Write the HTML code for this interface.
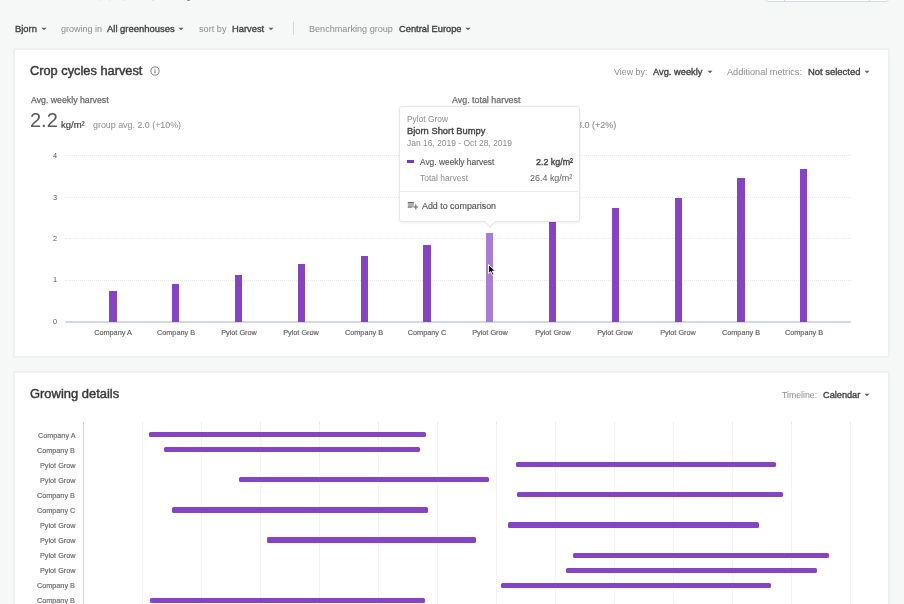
<!DOCTYPE html>
<html><head><meta charset="utf-8"><style>
html,body{margin:0;padding:0;width:904px;height:604px;overflow:hidden;background:#f6f8f7;}
body{position:relative;font-family:"Liberation Sans",sans-serif;}
.t{position:absolute;white-space:nowrap;line-height:20px;will-change:transform;}
.card{position:absolute;background:#fff;border:2px solid #eef0f3;border-radius:2px;box-sizing:border-box;}
</style></head><body>
<div style="position:absolute;left:765px;top:-20px;width:124px;height:21.5px;background:#fff;border:1px solid #d3dbe6;border-radius:3px;box-sizing:border-box"></div>
<div style="position:absolute;left:784.00px;top:-5.00px;width:1.00px;height:6.00px;background:#d3dbe6;"></div>
<div style="position:absolute;left:868.50px;top:-5.00px;width:1.00px;height:6.00px;background:#d3dbe6;"></div>
<div style="position:absolute;left:187.20px;top:0.00px;width:3.20px;height:1.00px;background:#8a8a8a;border-radius:0 0 1.5px 1.5px"></div>
<div style="position:absolute;left:98.70px;top:0.00px;width:1.60px;height:0.80px;background:#e2e4e4;"></div>
<div style="position:absolute;left:108.50px;top:0.00px;width:1.60px;height:0.80px;background:#e2e4e4;"></div>
<div style="position:absolute;left:122.70px;top:0.00px;width:1.60px;height:0.80px;background:#e2e4e4;"></div>
<div style="position:absolute;left:124.80px;top:0.00px;width:1.60px;height:0.80px;background:#e2e4e4;"></div>
<div style="position:absolute;left:152.40px;top:0.00px;width:1.60px;height:0.80px;background:#e2e4e4;"></div>
<div class="t" style="left:15.00px;top:19.00px;font-size:9.4px;font-weight:400;color:#424242;-webkit-text-stroke:0.35px #424242;">Bjorn</div>
<svg style="position:absolute;left:39.90px;top:24.90px" width="8" height="8" viewBox="0 0 8 8"><path d="M1.5 2.7 L6.5 2.7 L4 5.2 Z" fill="#606060"/></svg>
<div class="t" style="left:60.50px;top:19.00px;font-size:9.0px;font-weight:400;color:#8c8c8c;">growing in</div>
<div class="t" style="left:107.40px;top:19.00px;font-size:9.45px;font-weight:400;color:#424242;-webkit-text-stroke:0.35px #424242;">All greenhouses</div>
<svg style="position:absolute;left:177.40px;top:24.90px" width="8" height="8" viewBox="0 0 8 8"><path d="M1.5 2.7 L6.5 2.7 L4 5.2 Z" fill="#606060"/></svg>
<div class="t" style="left:198.80px;top:19.00px;font-size:9.2px;font-weight:400;color:#8c8c8c;">sort by</div>
<div class="t" style="left:232.40px;top:19.00px;font-size:9.35px;font-weight:400;color:#424242;-webkit-text-stroke:0.35px #424242;">Harvest</div>
<svg style="position:absolute;left:267.40px;top:24.90px" width="8" height="8" viewBox="0 0 8 8"><path d="M1.5 2.7 L6.5 2.7 L4 5.2 Z" fill="#606060"/></svg>
<div style="position:absolute;left:293.00px;top:22.00px;width:1.00px;height:13.00px;background:#cfd8e2;"></div>
<div class="t" style="left:309.20px;top:19.00px;font-size:9.1px;font-weight:400;color:#8c8c8c;">Benchmarking group</div>
<div class="t" style="left:398.60px;top:19.00px;font-size:9.3px;font-weight:400;color:#424242;-webkit-text-stroke:0.35px #424242;">Central Europe</div>
<svg style="position:absolute;left:463.90px;top:24.90px" width="8" height="8" viewBox="0 0 8 8"><path d="M1.5 2.7 L6.5 2.7 L4 5.2 Z" fill="#606060"/></svg>
<div class="card" style="left:13px;top:48px;width:877px;height:309.5px"></div>
<div class="t" style="left:30.20px;top:61.00px;font-size:12.8px;font-weight:400;color:#3a3a3a;-webkit-text-stroke:0.45px #3a3a3a;">Crop cycles harvest</div>
<svg style="position:absolute;left:149.9px;top:65.9px" width="10" height="10" viewBox="0 0 10 10"><circle cx="5" cy="5" r="4.1" fill="none" stroke="#7a7a7a" stroke-width="0.95"/><rect x="4.45" y="4.3" width="1.1" height="2.9" fill="#7a7a7a"/><rect x="4.45" y="2.7" width="1.1" height="1" fill="#8a8a8a"/></svg>
<div class="t" style="left:613.50px;top:62.00px;font-size:8.9px;font-weight:400;color:#8c8c8c;">View by:</div>
<div class="t" style="left:653.10px;top:62.00px;font-size:9.3px;font-weight:400;color:#424242;-webkit-text-stroke:0.35px #424242;">Avg. weekly</div>
<svg style="position:absolute;left:705.70px;top:68.30px" width="8" height="8" viewBox="0 0 8 8"><path d="M1.5 2.7 L6.5 2.7 L4 5.2 Z" fill="#606060"/></svg>
<div class="t" style="left:726.60px;top:62.00px;font-size:9.18px;font-weight:400;color:#8c8c8c;">Additional metrics:</div>
<div class="t" style="left:807.50px;top:62.00px;font-size:9.45px;font-weight:400;color:#424242;-webkit-text-stroke:0.35px #424242;">Not selected</div>
<svg style="position:absolute;left:862.90px;top:68.30px" width="8" height="8" viewBox="0 0 8 8"><path d="M1.5 2.7 L6.5 2.7 L4 5.2 Z" fill="#606060"/></svg>
<div class="t" style="left:30.50px;top:90.00px;font-size:8.75px;font-weight:400;color:#6a6a6a;-webkit-text-stroke:0.25px #6a6a6a;">Avg. weekly harvest</div>
<div class="t" style="left:30.00px;top:110.00px;font-size:20.0px;font-weight:400;color:#5a5a5a;">2.2</div>
<div class="t" style="left:60.50px;top:115.00px;font-size:9.5px;font-weight:400;color:#424242;-webkit-text-stroke:0.2px #424242;">kg/m²</div>
<div class="t" style="left:92.70px;top:115.00px;font-size:8.9px;font-weight:400;color:#8c8c8c;">group avg. 2.0 (+10%)</div>
<div class="t" style="left:452.10px;top:90.00px;font-size:8.9px;font-weight:400;color:#6a6a6a;-webkit-text-stroke:0.25px #6a6a6a;">Avg. total harvest</div>
<div class="t" style="left:452.00px;top:110.00px;font-size:20.0px;font-weight:400;color:#555;">30.0</div>
<div class="t" style="left:577.40px;top:115.00px;font-size:9.0px;font-weight:400;color:#8c8c8c;-webkit-text-stroke:0.12px #8c8c8c;">3.0 (+2%)</div>
<div style="position:absolute;left:65px;top:155px;width:786px;height:0;border-top:1px dotted #e8e8e8"></div>
<div style="position:absolute;left:65px;top:197px;width:786px;height:0;border-top:1px dotted #e8e8e8"></div>
<div style="position:absolute;left:65px;top:238px;width:786px;height:0;border-top:1px dotted #e8e8e8"></div>
<div style="position:absolute;left:65px;top:280px;width:786px;height:0;border-top:1px dotted #e8e8e8"></div>
<div class="t" style="left:-44.60px;width:200px;text-align:center;top:312.00px;font-size:7.3px;font-weight:400;color:#555;">0</div>
<div class="t" style="left:-44.60px;width:200px;text-align:center;top:270.00px;font-size:7.3px;font-weight:400;color:#555;">1</div>
<div class="t" style="left:-44.60px;width:200px;text-align:center;top:229.00px;font-size:7.3px;font-weight:400;color:#555;">2</div>
<div class="t" style="left:-44.60px;width:200px;text-align:center;top:188.00px;font-size:7.3px;font-weight:400;color:#555;">3</div>
<div class="t" style="left:-44.60px;width:200px;text-align:center;top:146.00px;font-size:7.3px;font-weight:400;color:#555;">4</div>
<div style="position:absolute;left:65.00px;top:321.00px;width:786.00px;height:2.00px;background:#d0dae4;"></div>
<div style="position:absolute;left:109.30px;top:291.40px;width:7.40px;height:30.20px;background:#8644c2;"></div>
<div class="t" style="left:13.00px;width:200px;text-align:center;top:323.00px;font-size:7.3px;font-weight:400;color:#606060;-webkit-text-stroke:0.15px #606060;">Company A</div>
<div style="position:absolute;left:172.10px;top:284.40px;width:7.40px;height:37.20px;background:#8644c2;"></div>
<div class="t" style="left:75.80px;width:200px;text-align:center;top:323.00px;font-size:7.3px;font-weight:400;color:#606060;-webkit-text-stroke:0.15px #606060;">Company B</div>
<div style="position:absolute;left:234.90px;top:275.20px;width:7.40px;height:46.40px;background:#8644c2;"></div>
<div class="t" style="left:138.60px;width:200px;text-align:center;top:323.00px;font-size:7.3px;font-weight:400;color:#606060;-webkit-text-stroke:0.15px #606060;">Pylot Grow</div>
<div style="position:absolute;left:297.70px;top:264.40px;width:7.40px;height:57.20px;background:#8644c2;"></div>
<div class="t" style="left:201.40px;width:200px;text-align:center;top:323.00px;font-size:7.3px;font-weight:400;color:#606060;-webkit-text-stroke:0.15px #606060;">Pylot Grow</div>
<div style="position:absolute;left:360.50px;top:256.20px;width:7.40px;height:65.40px;background:#8644c2;"></div>
<div class="t" style="left:264.20px;width:200px;text-align:center;top:323.00px;font-size:7.3px;font-weight:400;color:#606060;-webkit-text-stroke:0.15px #606060;">Company B</div>
<div style="position:absolute;left:423.30px;top:244.90px;width:7.40px;height:76.70px;background:#8644c2;"></div>
<div class="t" style="left:327.00px;width:200px;text-align:center;top:323.00px;font-size:7.3px;font-weight:400;color:#606060;-webkit-text-stroke:0.15px #606060;">Company C</div>
<div style="position:absolute;left:486.10px;top:233.10px;width:7.40px;height:88.50px;background:#a87dd6;"></div>
<div class="t" style="left:389.80px;width:200px;text-align:center;top:323.00px;font-size:7.3px;font-weight:400;color:#606060;-webkit-text-stroke:0.15px #606060;">Pylot Grow</div>
<div style="position:absolute;left:548.90px;top:221.90px;width:7.40px;height:99.70px;background:#8644c2;"></div>
<div class="t" style="left:452.60px;width:200px;text-align:center;top:323.00px;font-size:7.3px;font-weight:400;color:#606060;-webkit-text-stroke:0.15px #606060;">Pylot Grow</div>
<div style="position:absolute;left:611.70px;top:208.00px;width:7.40px;height:113.60px;background:#8644c2;"></div>
<div class="t" style="left:515.40px;width:200px;text-align:center;top:323.00px;font-size:7.3px;font-weight:400;color:#606060;-webkit-text-stroke:0.15px #606060;">Pylot Grow</div>
<div style="position:absolute;left:674.50px;top:197.80px;width:7.40px;height:123.80px;background:#8644c2;"></div>
<div class="t" style="left:578.20px;width:200px;text-align:center;top:323.00px;font-size:7.3px;font-weight:400;color:#606060;-webkit-text-stroke:0.15px #606060;">Pylot Grow</div>
<div style="position:absolute;left:737.30px;top:178.00px;width:7.40px;height:143.60px;background:#8644c2;"></div>
<div class="t" style="left:641.00px;width:200px;text-align:center;top:323.00px;font-size:7.3px;font-weight:400;color:#606060;-webkit-text-stroke:0.15px #606060;">Company B</div>
<div style="position:absolute;left:800.10px;top:169.00px;width:7.40px;height:152.60px;background:#8644c2;"></div>
<div class="t" style="left:703.80px;width:200px;text-align:center;top:323.00px;font-size:7.3px;font-weight:400;color:#606060;-webkit-text-stroke:0.15px #606060;">Company B</div>
<svg style="position:absolute;left:486.6px;top:263.2px" width="10" height="14" viewBox="0 0 10 14"><path d="M1.5 1.5 L1.5 10.5 L3.8 8.6 L5.4 12.2 L6.9 11.5 L5.4 8.1 L8.4 8.1 Z" fill="#111" stroke="#fff" stroke-width="0.9"/></svg>
<div style="position:absolute;left:399.4px;top:105.5px;width:180.5px;height:116.5px;box-sizing:border-box;background:#fff;border:1px solid #e6e6ed;border-radius:3px;box-shadow:0 1px 3px rgba(0,0,0,0.07)"></div>
<div style="position:absolute;left:485.6px;top:218.2px;width:7px;height:7px;background:#fff;border-right:1px solid #e6e6ed;border-bottom:1px solid #e6e6ed;transform:rotate(45deg)"></div>
<div class="t" style="left:407.20px;top:109.00px;font-size:8.4px;font-weight:400;color:#8c8c8c;">Pylot Grow</div>
<div class="t" style="left:407.00px;top:121.00px;font-size:9.35px;font-weight:400;color:#424242;-webkit-text-stroke:0.35px #424242;">Bjorn Short Bumpy</div>
<div class="t" style="left:407.20px;top:133.00px;font-size:8.47px;font-weight:400;color:#8c8c8c;">Jan 16, 2019 - Oct 28, 2019</div>
<div style="position:absolute;left:407.00px;top:160.20px;width:7.30px;height:2.50px;background:#7a35c0;"></div>
<div class="t" style="left:419.90px;top:152.00px;font-size:8.4px;font-weight:400;color:#5a5a5a;-webkit-text-stroke:0.15px #5a5a5a;">Avg. weekly harvest</div>
<div class="t" style="right:331.40px;text-align:right;top:152.00px;font-size:8.9px;font-weight:400;color:#424242;-webkit-text-stroke:0.35px #424242;">2.2 kg/m²</div>
<div class="t" style="left:419.90px;top:168.00px;font-size:8.47px;font-weight:400;color:#8c8c8c;">Total harvest</div>
<div class="t" style="right:331.40px;text-align:right;top:168.00px;font-size:8.95px;font-weight:400;color:#606060;">26.4 kg/m²</div>
<div style="position:absolute;left:400.40px;top:191.20px;width:178.00px;height:1.00px;background:#e8ebf0;"></div>
<svg style="position:absolute;left:0;top:0" width="904" height="604"><rect x="407.8" y="202.6" width="6" height="4.2" fill="#b0b0b0"/><rect x="407.8" y="201.9" width="6" height="1.2" fill="#6e6e6e"/><rect x="407.8" y="206.6" width="4.6" height="1.1" fill="#6e6e6e"/><rect x="413.6" y="206.4" width="4.4" height="1.2" fill="#707070"/><rect x="415.2" y="204.6" width="1.2" height="4.9" fill="#707070"/></svg>
<div class="t" style="left:422.20px;top:196.00px;font-size:8.9px;font-weight:400;color:#555;-webkit-text-stroke:0.15px #555;">Add to comparison</div>
<div class="card" style="left:13px;top:371px;width:877px;height:260px"></div>
<div class="t" style="left:30.20px;top:384.00px;font-size:12.95px;font-weight:400;color:#3a3a3a;-webkit-text-stroke:0.45px #3a3a3a;">Growing details</div>
<div class="t" style="left:781.60px;top:385.00px;font-size:8.76px;font-weight:400;color:#8c8c8c;">Timeline:</div>
<div class="t" style="left:823.00px;top:385.00px;font-size:9.2px;font-weight:400;color:#424242;-webkit-text-stroke:0.35px #424242;">Calendar</div>
<svg style="position:absolute;left:862.90px;top:391.10px" width="8" height="8" viewBox="0 0 8 8"><path d="M1.5 2.7 L6.5 2.7 L4 5.2 Z" fill="#606060"/></svg>
<div style="position:absolute;left:142px;top:422px;width:0;height:190px;border-left:1px dotted #e9e9e9"></div>
<div style="position:absolute;left:201px;top:422px;width:0;height:190px;border-left:1px dotted #e9e9e9"></div>
<div style="position:absolute;left:260px;top:422px;width:0;height:190px;border-left:1px dotted #e9e9e9"></div>
<div style="position:absolute;left:319px;top:422px;width:0;height:190px;border-left:1px dotted #e9e9e9"></div>
<div style="position:absolute;left:378px;top:422px;width:0;height:190px;border-left:1px dotted #e9e9e9"></div>
<div style="position:absolute;left:437px;top:422px;width:0;height:190px;border-left:1px dotted #e9e9e9"></div>
<div style="position:absolute;left:496px;top:422px;width:0;height:190px;border-left:1px dotted #e9e9e9"></div>
<div style="position:absolute;left:555px;top:422px;width:0;height:190px;border-left:1px dotted #e9e9e9"></div>
<div style="position:absolute;left:614px;top:422px;width:0;height:190px;border-left:1px dotted #e9e9e9"></div>
<div style="position:absolute;left:673px;top:422px;width:0;height:190px;border-left:1px dotted #e9e9e9"></div>
<div style="position:absolute;left:732px;top:422px;width:0;height:190px;border-left:1px dotted #e9e9e9"></div>
<div style="position:absolute;left:791px;top:422px;width:0;height:190px;border-left:1px dotted #e9e9e9"></div>
<div style="position:absolute;left:850px;top:422px;width:0;height:190px;border-left:1px dotted #e9e9e9"></div>
<div style="position:absolute;left:83.00px;top:422.00px;width:1.40px;height:190.00px;background:#c9d5e0;"></div>
<div class="t" style="right:828.90px;text-align:right;top:426.00px;font-size:7.25px;font-weight:400;color:#666;-webkit-text-stroke:0.15px #666;">Company A</div>
<div style="position:absolute;left:149.10px;top:432.10px;width:276.50px;height:5.20px;background:#8644c2;border-radius:1.6px"></div>
<div class="t" style="right:828.90px;text-align:right;top:441.00px;font-size:7.25px;font-weight:400;color:#666;-webkit-text-stroke:0.15px #666;">Company B</div>
<div style="position:absolute;left:164.10px;top:447.15px;width:255.70px;height:5.20px;background:#8644c2;border-radius:1.6px"></div>
<div class="t" style="right:828.90px;text-align:right;top:456.00px;font-size:7.25px;font-weight:400;color:#666;-webkit-text-stroke:0.15px #666;">Pylot Grow</div>
<div style="position:absolute;left:515.70px;top:462.20px;width:260.80px;height:5.20px;background:#8644c2;border-radius:1.6px"></div>
<div class="t" style="right:828.90px;text-align:right;top:471.00px;font-size:7.25px;font-weight:400;color:#666;-webkit-text-stroke:0.15px #666;">Pylot Grow</div>
<div style="position:absolute;left:238.70px;top:477.25px;width:250.80px;height:5.20px;background:#8644c2;border-radius:1.6px"></div>
<div class="t" style="right:828.90px;text-align:right;top:486.00px;font-size:7.25px;font-weight:400;color:#666;-webkit-text-stroke:0.15px #666;">Company B</div>
<div style="position:absolute;left:516.90px;top:492.30px;width:265.90px;height:5.20px;background:#8644c2;border-radius:1.6px"></div>
<div class="t" style="right:828.90px;text-align:right;top:501.00px;font-size:7.25px;font-weight:400;color:#666;-webkit-text-stroke:0.15px #666;">Company C</div>
<div style="position:absolute;left:172.00px;top:507.35px;width:256.10px;height:5.20px;background:#8644c2;border-radius:1.6px"></div>
<div class="t" style="right:828.90px;text-align:right;top:516.00px;font-size:7.25px;font-weight:400;color:#666;-webkit-text-stroke:0.15px #666;">Pylot Grow</div>
<div style="position:absolute;left:508.40px;top:522.40px;width:250.60px;height:5.20px;background:#8644c2;border-radius:1.6px"></div>
<div class="t" style="right:828.90px;text-align:right;top:531.00px;font-size:7.25px;font-weight:400;color:#666;-webkit-text-stroke:0.15px #666;">Pylot Grow</div>
<div style="position:absolute;left:267.40px;top:537.45px;width:208.90px;height:5.20px;background:#8644c2;border-radius:1.6px"></div>
<div class="t" style="right:828.90px;text-align:right;top:546.00px;font-size:7.25px;font-weight:400;color:#666;-webkit-text-stroke:0.15px #666;">Pylot Grow</div>
<div style="position:absolute;left:573.00px;top:552.50px;width:255.70px;height:5.20px;background:#8644c2;border-radius:1.6px"></div>
<div class="t" style="right:828.90px;text-align:right;top:561.00px;font-size:7.25px;font-weight:400;color:#666;-webkit-text-stroke:0.15px #666;">Pylot Grow</div>
<div style="position:absolute;left:566.40px;top:567.55px;width:250.20px;height:5.20px;background:#8644c2;border-radius:1.6px"></div>
<div class="t" style="right:828.90px;text-align:right;top:576.00px;font-size:7.25px;font-weight:400;color:#666;-webkit-text-stroke:0.15px #666;">Company B</div>
<div style="position:absolute;left:500.70px;top:582.60px;width:270.80px;height:5.20px;background:#8644c2;border-radius:1.6px"></div>
<div class="t" style="right:828.90px;text-align:right;top:591.00px;font-size:7.25px;font-weight:400;color:#666;-webkit-text-stroke:0.15px #666;">Company B</div>
<div style="position:absolute;left:149.50px;top:597.65px;width:275.90px;height:5.20px;background:#8644c2;border-radius:1.6px"></div>
</body></html>
